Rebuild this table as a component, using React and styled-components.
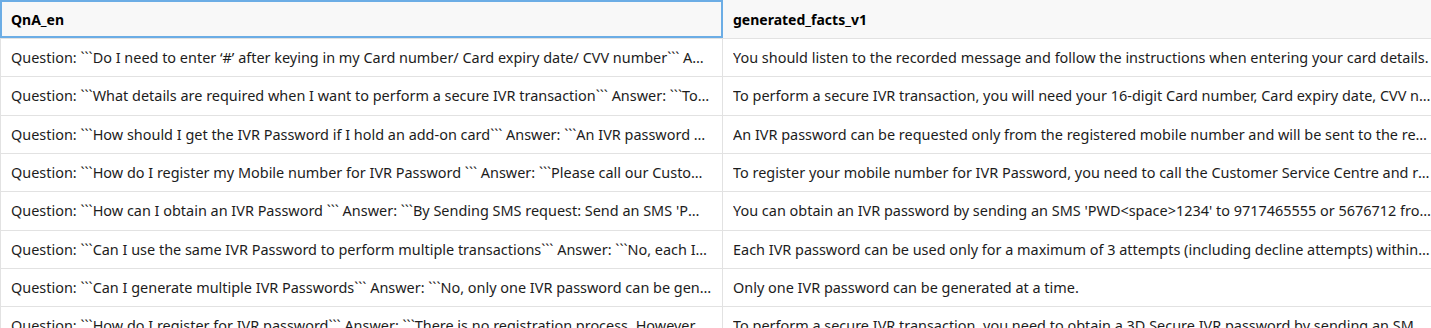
import React from "react";
import styled, { createGlobalStyle } from "styled-components";

const rows = [
  [
    "Question: ```Do I need to enter ‘#’ after keying in my Card number/ Card expiry date/ CVV number``` Answer: ```Please listen to the recorded message and follow the instructions while entering your card details```",
    "You should listen to the recorded message and follow the instructions when entering your card details.",
  ],
  [
    "Question: ```What details are required when I want to perform a secure IVR transaction``` Answer: ```To perform a secure IVR transaction you will need your 16-digit Card number```",
    "To perform a secure IVR transaction, you will need your 16-digit Card number, Card expiry date, CVV number and IVR password.",
  ],
  [
    "Question: ```How should I get the IVR Password if I hold an add-on card``` Answer: ```An IVR password can be requested only from the registered mobile number```",
    "An IVR password can be requested only from the registered mobile number and will be sent to the registered mobile number only.",
  ],
  [
    "Question: ```How do I register my Mobile number for IVR Password ``` Answer: ```Please call our Customer Service Centre```",
    "To register your mobile number for IVR Password, you need to call the Customer Service Centre and register your number.",
  ],
  [
    "Question: ```How can I obtain an IVR Password ``` Answer: ```By Sending SMS request: Send an SMS 'PWD<space>1234' to 9717465555```",
    "You can obtain an IVR password by sending an SMS 'PWD<space>1234' to 9717465555 or 5676712 from your registered mobile number.",
  ],
  [
    "Question: ```Can I use the same IVR Password to perform multiple transactions``` Answer: ```No, each IVR password is valid for one transaction```",
    "Each IVR password can be used only for a maximum of 3 attempts (including decline attempts) within 2 hours.",
  ],
  [
    "Question: ```Can I generate multiple IVR Passwords``` Answer: ```No, only one IVR password can be generated at a time```",
    "Only one IVR password can be generated at a time.",
  ],
  [
    "Question: ```How do I register for IVR password``` Answer: ```There is no registration process. However you need to obtain a password```",
    "To perform a secure IVR transaction, you need to obtain a 3D Secure IVR password by sending an SMS from your registered mobile.",
  ],
];

const GlobalStyle = createGlobalStyle`
  body {
    margin: 0;
    background: #ffffff;
    font-family: "Noto Sans", "Open Sans", sans-serif;
  }
`;

const Viewport = styled.div`
  width: 100vw;
  height: 328px;
  overflow: hidden;
`;

const Table = styled.div`
  width: 1442px;
  display: flex;
  flex-direction: column;
`;

const Row = styled.div`
  display: grid;
  grid-template-columns: 722px 720px;
  height: ${(p) => (p.$header ? "39px" : "38.33px")};
  box-sizing: border-box;
  background: ${(p) => (p.$header ? "#f8f8f8" : "#ffffff")};
  border-bottom: 1px solid #e2e2e2;
  border-left: 1px solid #e2e2e2;
`;

const Cell = styled.div`
  box-sizing: border-box;
  display: flex;
  align-items: center;
  min-width: 0;
  padding: 0 10px;
  border-right: 1px solid #e2e2e2;
  font-size: ${(p) => (p.$header ? "14px" : "14.45px")};
  font-weight: ${(p) => (p.$header ? 700 : 400)};
  color: ${(p) => (p.$header ? "#000000" : "#1c1c1c")};
  outline: ${(p) => (p.$selected ? "2px solid #6cade5" : "none")};
  outline-offset: -2px;
  margin-left: ${(p) => (p.$selected ? "-1px" : "0")};
  padding-left: ${(p) => (p.$selected ? "11px" : "10px")};
`;

const Text = styled.span`
  display: block;
  white-space: nowrap;
  overflow: hidden;
  text-overflow: ellipsis;
  min-width: 0;
`;

export default function App() {
  return (
    <Viewport>
      <GlobalStyle />
      <Table>
        <Row $header>
          <Cell $header $selected>
            <Text>QnA_en</Text>
          </Cell>
          <Cell $header>
            <Text>generated_facts_v1</Text>
          </Cell>
        </Row>
        {rows.map(([q, f], i) => (
          <Row key={i}>
            <Cell>
              <Text>{q}</Text>
            </Cell>
            <Cell>
              <Text>{f}</Text>
            </Cell>
          </Row>
        ))}
      </Table>
    </Viewport>
  );
}
